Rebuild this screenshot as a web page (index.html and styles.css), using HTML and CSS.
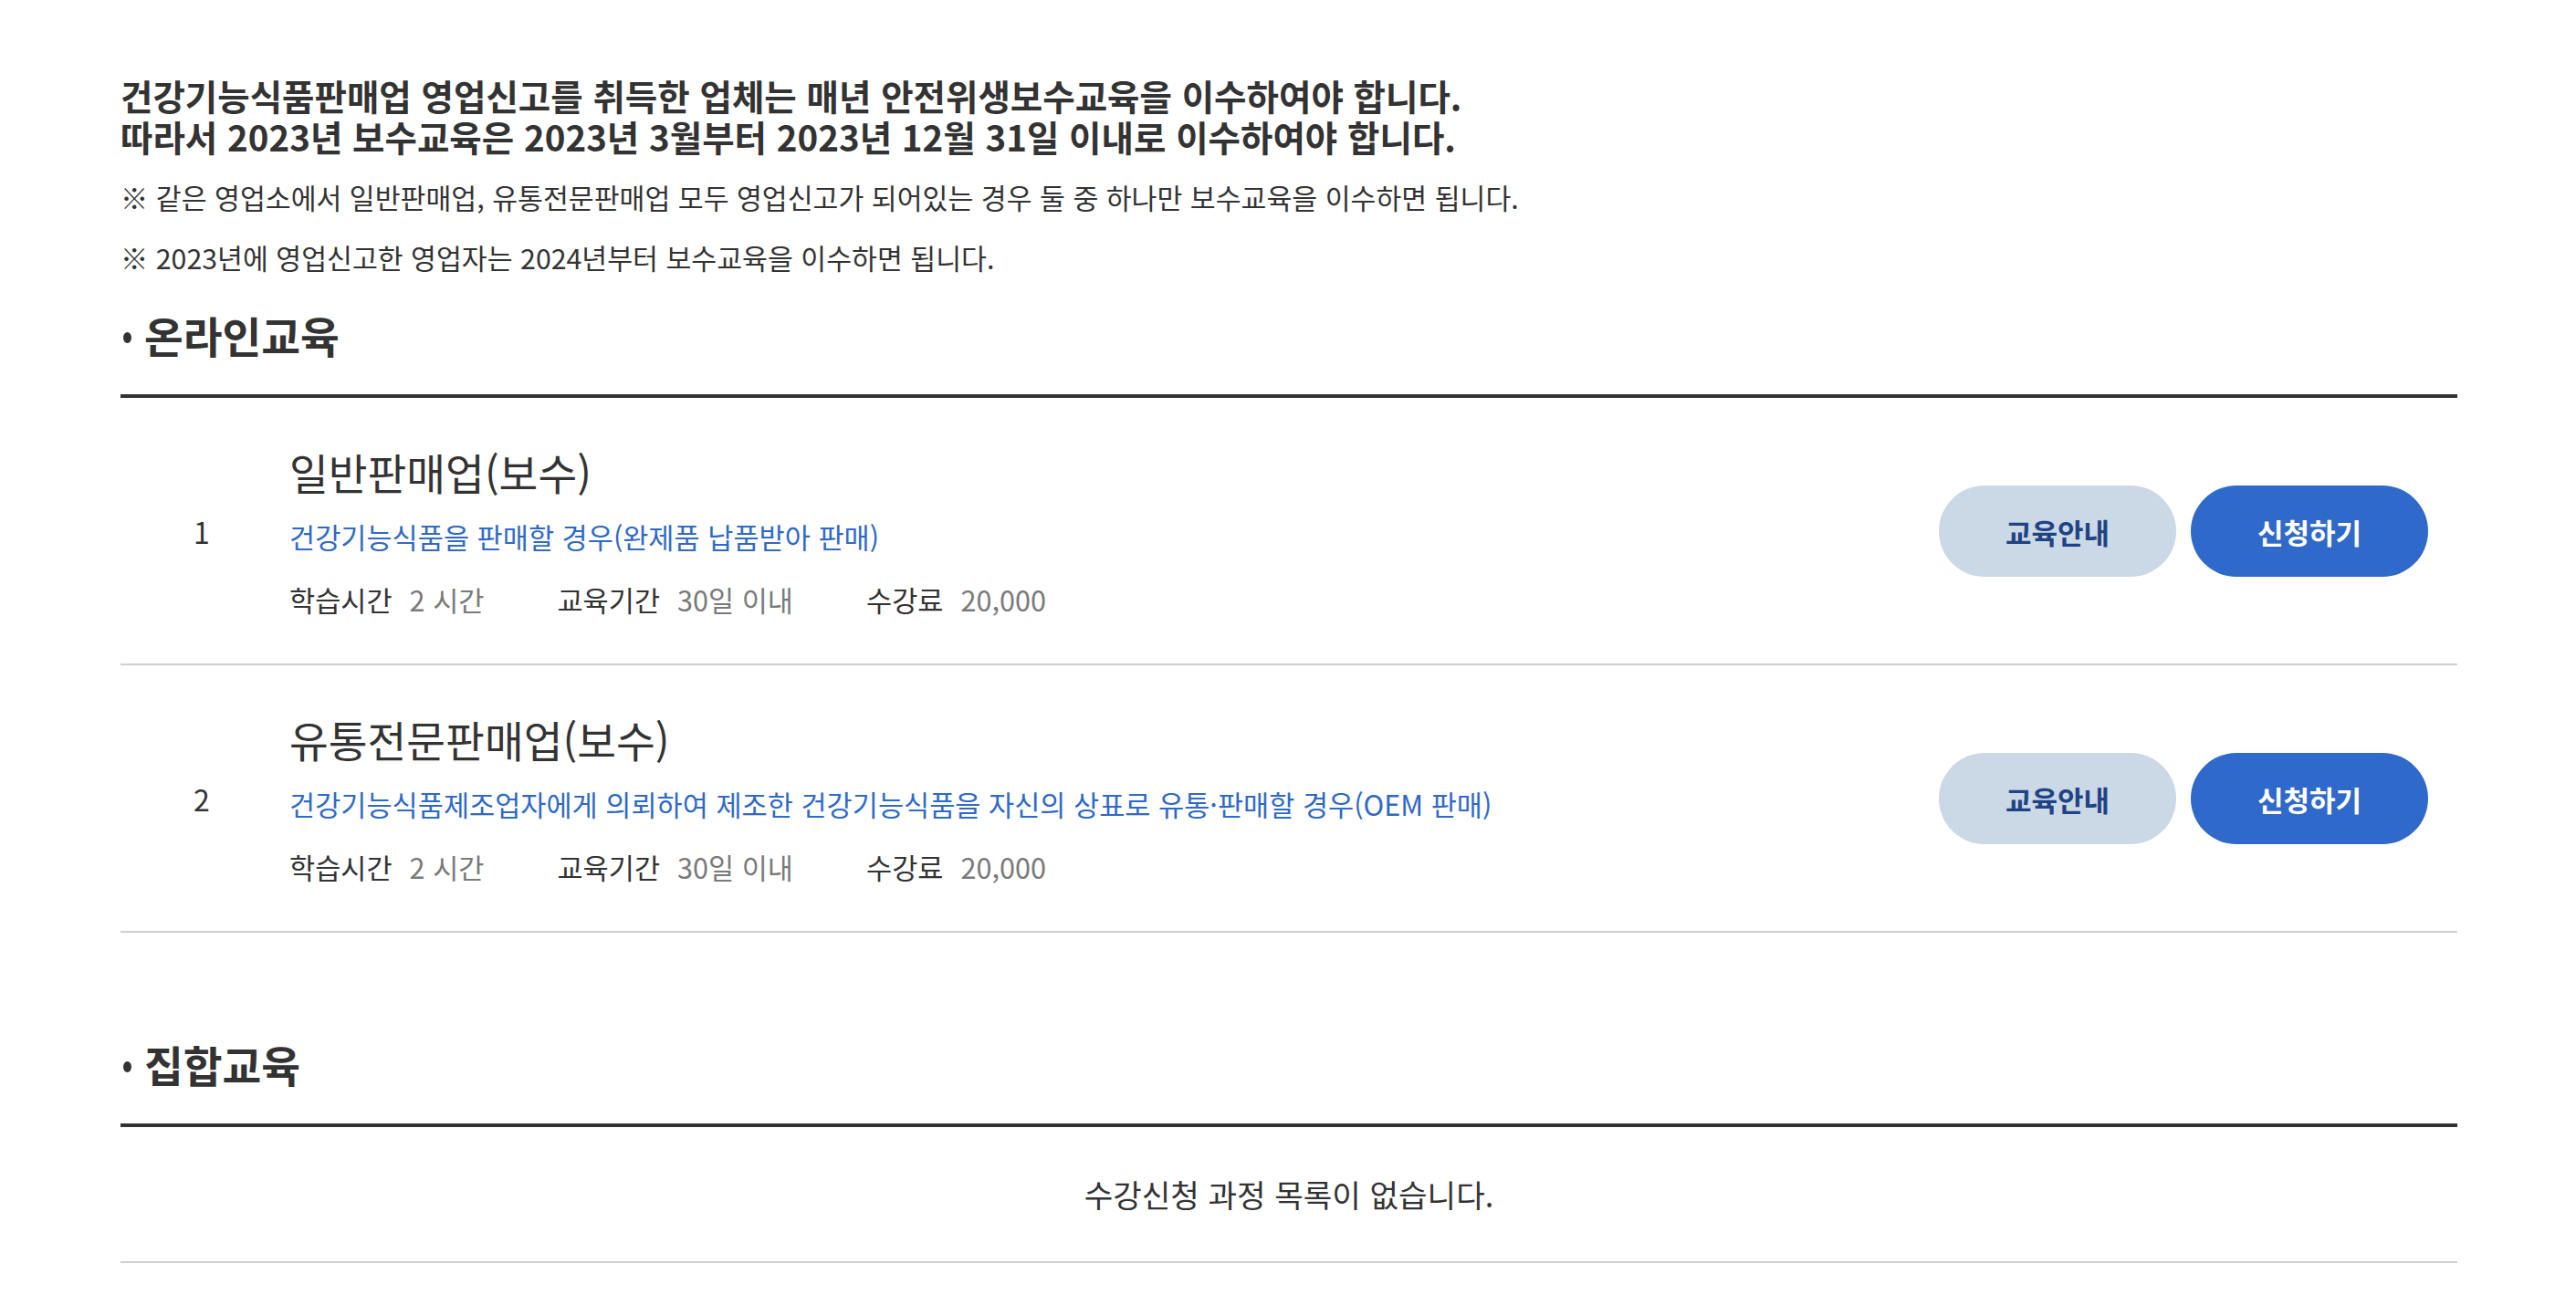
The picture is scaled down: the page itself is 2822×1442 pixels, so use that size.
FILE: index.html
```html
<!DOCTYPE html>
<html lang="ko">
<head>
<meta charset="utf-8">
<title>보수교육</title>
<link rel="stylesheet" href="styles.css">
</head>
<body>
<div class="wrap">
  <div class="intro">
    <p class="lead">건강기능식품판매업 영업신고를 취득한 업체는 매년 안전위생보수교육을 이수하여야 합니다.<br>따라서 2023년 보수교육은 2023년 3월부터 2023년 12월 31일 이내로 이수하여야 합니다.</p>
    <p class="note">※ 같은 영업소에서 일반판매업, 유통전문판매업 모두 영업신고가 되어있는 경우 둘 중 하나만 보수교육을 이수하면 됩니다.</p>
    <p class="note note2">※ 2023년에 영업신고한 영업자는 2024년부터 보수교육을 이수하면 됩니다.</p>
  </div>

  <h2 class="sec-title">온라인교육</h2>
  <ul class="course-list">
    <li class="course">
      <div class="num">1</div>
      <div class="info">
        <p class="c-title">일반판매업(보수)</p>
        <p class="c-desc">건강기능식품을 판매할 경우(완제품 납품받아 판매)</p>
        <div class="meta">
          <span class="m-item"><span class="m-label">학습시간</span><span class="m-val">2 시간</span></span>
          <span class="m-item"><span class="m-label">교육기간</span><span class="m-val">30일 이내</span></span>
          <span class="m-item"><span class="m-label">수강료</span><span class="m-val">20,000</span></span>
        </div>
      </div>
      <div class="btns">
        <a class="btn btn-guide">교육안내</a>
        <a class="btn btn-apply">신청하기</a>
      </div>
    </li>
    <li class="course">
      <div class="num">2</div>
      <div class="info">
        <p class="c-title">유통전문판매업(보수)</p>
        <p class="c-desc">건강기능식품제조업자에게 의뢰하여 제조한 건강기능식품을 자신의 상표로 유통·판매할 경우(OEM 판매)</p>
        <div class="meta">
          <span class="m-item"><span class="m-label">학습시간</span><span class="m-val">2 시간</span></span>
          <span class="m-item"><span class="m-label">교육기간</span><span class="m-val">30일 이내</span></span>
          <span class="m-item"><span class="m-label">수강료</span><span class="m-val">20,000</span></span>
        </div>
      </div>
      <div class="btns">
        <a class="btn btn-guide">교육안내</a>
        <a class="btn btn-apply">신청하기</a>
      </div>
    </li>
  </ul>

  <h2 class="sec-title sec2">집합교육</h2>
  <div class="empty">수강신청 과정 목록이 없습니다.</div>
</div>
</body>
</html>
```

FILE: styles.css
```css
* { box-sizing: border-box; }
html, body {
  margin: 0;
  padding: 0;
  background: #fff;
}
body {
  font-family: "Noto Sans CJK KR", "Noto Sans", sans-serif;
  color: #333;
}
p { margin: 0; }

.wrap {
  width: 2560px;
  margin-left: 132px;
  padding-top: 82px;
}

.lead {
  font-size: 38.5px;
  font-weight: 700;
  line-height: 45px;
  color: #333;
}
.note {
  margin-top: 24px;
  font-size: 30.3px;
  line-height: 40px;
  color: #333;
}
.note2 { margin-top: 26px; }

.sec-title {
  margin: 35px 0 0;
  padding-bottom: 35px;
  border-bottom: 4px solid #333;
  font-size: 46.5px;
  font-weight: 700;
  line-height: 60px;
  color: #333;
  display: flex;
  align-items: center;
}
.sec-title::before {
  content: "";
  width: 9px;
  height: 12px;
  border-radius: 50%;
  background: #333;
  margin: 6px 14px 0 3px;
}
.sec2 { margin-top: 114px; }

.course-list {
  list-style: none;
  margin: 0;
  padding: 0;
}
.course {
  display: flex;
  align-items: center;
  border-bottom: 2px solid #cfcfcf;
  padding: 51px 0 50px;
}
.num {
  width: 178px;
  text-align: center;
  font-size: 32px;
  line-height: 40px;
  color: #333;
}
.info {
  margin-left: 7px;
  flex: 1;
}
.c-title {
  font-size: 46.5px;
  line-height: 60px;
  color: #333;
}
.c-desc {
  margin-top: 21px;
  font-size: 30.6px;
  line-height: 40px;
  color: #2f69c9;
}
.meta {
  margin-top: 29px;
  display: flex;
  font-size: 30.6px;
  line-height: 40px;
}
.m-item {
  display: flex;
  gap: 19px;
  margin-right: 80px;
}
.m-label { color: #333; }
.m-val { color: #7a7a7a; }

.btns {
  display: flex;
  gap: 16px;
  margin-right: 32px;
}
.btn {
  width: 260px;
  height: 100px;
  border-radius: 50px;
  display: flex;
  align-items: center;
  justify-content: center;
  font-size: 31px;
  font-weight: 700;
  text-decoration: none;
}
.btn-guide {
  background: #cbd8e5;
  color: #1f4384;
}
.btn-apply {
  background: #2f69c9;
  color: #fff;
}

.empty {
  border-bottom: 2px solid #cfcfcf;
  padding: 53px 0 54px;
  text-align: center;
  font-size: 34.3px;
  line-height: 40px;
  color: #333;
}
```
